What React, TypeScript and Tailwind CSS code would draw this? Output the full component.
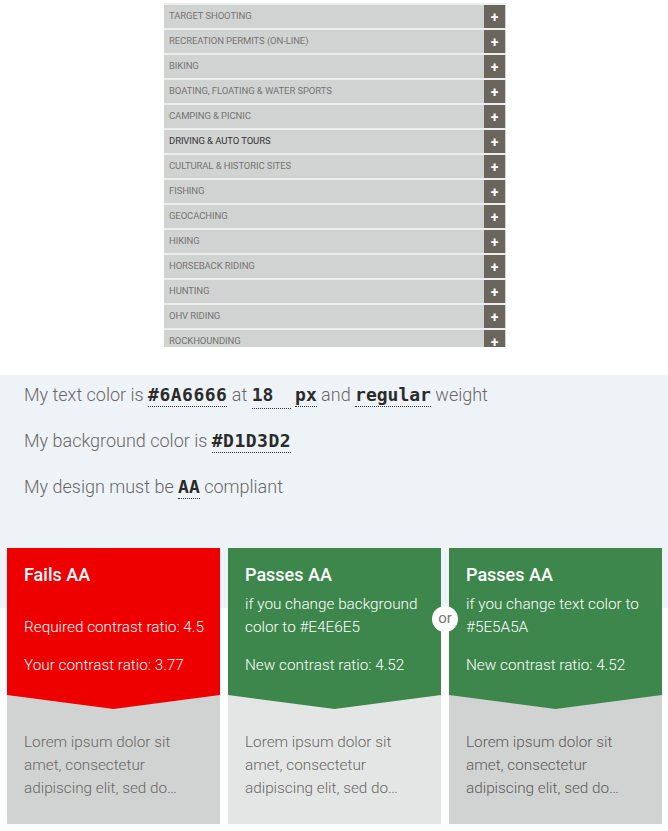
import React from "react";

const activities = [
  "TARGET SHOOTING",
  "RECREATION PERMITS (ON-LINE)",
  "BIKING",
  "BOATING, FLOATING & WATER SPORTS",
  "CAMPING & PICNIC",
  "DRIVING & AUTO TOURS",
  "CULTURAL & HISTORIC SITES",
  "FISHING",
  "GEOCACHING",
  "HIKING",
  "HORSEBACK RIDING",
  "HUNTING",
  "OHV RIDING",
  "ROCKHOUNDING",
];

const Code: React.FC<{ children: React.ReactNode; className?: string }> = ({
  children,
  className = "",
}) => (
  <span
    className={
      "font-['DejaVu_Sans_Mono',monospace] font-bold text-[#2b2b2b] text-[18px] border-b border-dotted border-[#333] pb-[1px] " +
      className
    }
  >
    {children}
  </span>
);

type CardProps = {
  color: string;
  bottom: string;
  lorem: string;
  title: string;
  children: React.ReactNode;
};

const Card: React.FC<CardProps> = ({ color, bottom, lorem, title, children }) => (
  <div className={"w-[213px] h-[276px] " + bottom}>
    <div
      className={"h-[161px] pl-[17px] pr-[6px] pt-[15px] text-white " + color}
      style={{ clipPath: "polygon(0 0, 100% 0, 100% 147px, 50% 100%, 0 147px)" }}
    >
      <div className="text-[18px] leading-[24px] font-medium">{title}</div>
      {children}
    </div>
    <p className={"px-[17px] pt-[22px] pr-[30px] text-[15.3px] leading-[23px] font-light " + lorem}>
      Lorem ipsum dolor sit amet, consectetur adipiscing elit, sed do…
    </p>
  </div>
);

export default function App() {
  return (
    <div className="w-[668px] h-[831px] bg-white font-['Roboto',sans-serif] overflow-hidden">
      <div className="h-[347px] overflow-hidden pt-[3px]">
        <div className="ml-[164px] w-[342px] flex flex-col gap-[2px] bg-[#ededed] pt-[2px]">
          {activities.map((a) => (
            <div key={a} className="flex h-[23px] bg-[#d1d3d2]">
              <div
                className={
                  "flex-1 flex items-center pl-[5px] text-[9.5px] tracking-[-0.1px] " +
                  (a === "DRIVING & AUTO TOURS" ? "text-[#333]" : "text-[#777373]")
                }
              >
                {a}
              </div>
              <div className="w-[21px] mr-[1px] bg-[#6b665d] flex items-center justify-center text-white text-[14px] font-bold leading-none">
                +
              </div>
            </div>
          ))}
        </div>
      </div>

      <div className="mt-[28px] bg-[linear-gradient(#eef3f8_0,#eef3f8_233px,#fff_233px)]">
        <div className="pl-[24px] pt-[6px] text-[18px] leading-[28px] font-light text-[#6a6666]">
          <p className="mb-[18px]">
            My text color is <Code className="tracking-[0.5px]">#6A6666</Code> at{" "}
            <Code className="inline-block w-[39px] leading-[24px]">18</Code>{" "}
            <Code>px</Code> and <Code>regular</Code> weight
          </p>
          <p className="mb-[18px]">
            My background color is <Code className="tracking-[0.5px]">#D1D3D2</Code>
          </p>
          <p>
            My design must be <Code>AA</Code> compliant
          </p>
        </div>

        <div className="relative flex gap-[8px] pl-[7px] mt-[47px]">
          <Card color="bg-[#ee0000]" bottom="bg-[#d1d3d2]" lorem="text-[#6a6666]" title="Fails AA">
            <p className="mt-[29px] text-[15.3px] leading-[23px] font-light">Required contrast ratio: 4.5</p>
            <p className="mt-[15px] text-[15.3px] leading-[23px] font-light">Your contrast ratio: 3.77</p>
          </Card>
          <Card color="bg-[#3d874c]" bottom="bg-[#e4e6e5]" lorem="text-[#6a6666]" title="Passes AA">
            <p className="mt-[6px] pr-[8px] text-[15.3px] leading-[23px] font-light">
              if you change background color to #E4E6E5
            </p>
            <p className="mt-[15px] text-[15.3px] leading-[23px] font-light">New contrast ratio: 4.52</p>
          </Card>
          <Card color="bg-[#3d874c]" bottom="bg-[#d1d3d2]" lorem="text-[#5e5a5a]" title="Passes AA">
            <p className="mt-[6px] pr-[8px] text-[15.3px] leading-[23px] font-light">
              if you change text color to #5E5A5A
            </p>
            <p className="mt-[15px] text-[15.3px] leading-[23px] font-light">New contrast ratio: 4.52</p>
          </Card>
          <div className="absolute left-[432px] top-[58px] w-[26px] h-[26px] rounded-full bg-white flex items-center justify-center text-[15px] text-[#777] leading-none pb-[2px]">
            or
          </div>
        </div>
      </div>
    </div>
  );
}
